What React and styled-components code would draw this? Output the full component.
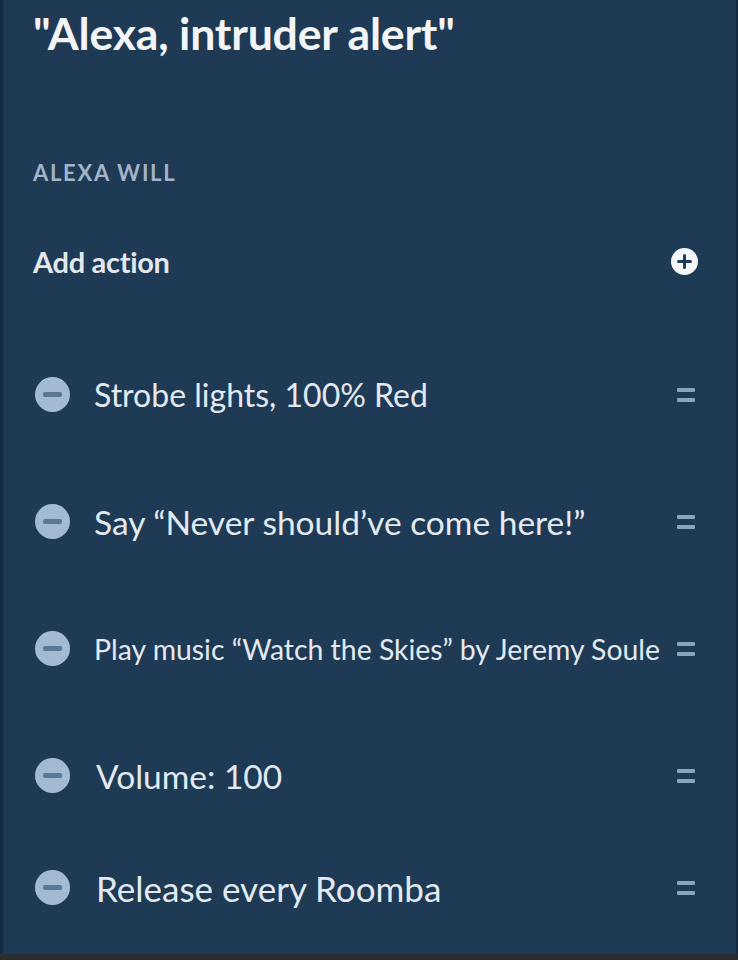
import React from "react";
import styled, { createGlobalStyle } from "styled-components";

const Global = createGlobalStyle`
  html, body { margin: 0; padding: 0; background: #2a2c2f; }
  body { font-family: Lato, "Liberation Sans", sans-serif; }
`;

const Screen = styled.div`
  width: 738px;
  height: 954px;
  box-sizing: border-box;
  background: #1f3a55;
  border-left: 3px solid #142a40;
  border-right: 2px solid #152b41;
  display: flex;
  flex-direction: column;
  overflow: hidden;
`;

const Title = styled.h1`
  margin: 0;
  padding: 8px 0 0 30px;
  height: 58px;
  font-family: Lato, "Liberation Sans", sans-serif;
  font-weight: 700;
  font-size: 44.6px;
  line-height: 50px;
  color: #f2f4f6;
  letter-spacing: -0.2px;
`;

const SectionLabel = styled.div`
  margin-top: 94px;
  padding-left: 30px;
  font-weight: 700;
  font-size: 22px;
  line-height: 26px;
  color: #a2b4c7;
  letter-spacing: 1.7px;
`;

const AddRow = styled.div`
  margin-top: 58px;
  padding: 0 38px 0 30px;
  height: 34px;
  display: flex;
  align-items: center;
  justify-content: space-between;
`;

const AddLabel = styled.span`
  font-size: 29px;
  font-weight: 700;
  color: #e2e8ee;
  letter-spacing: -0.3px;
`;

const PlusButton = styled.span`
  width: 27px;
  height: 27px;
  border-radius: 50%;
  background: #f4f6f8;
  display: flex;
  align-items: center;
  justify-content: center;
`;

const List = styled.div`
  margin-top: 53px;
  display: flex;
  flex-direction: column;
`;

const Row = styled.div`
  height: 127px;
  display: flex;
  align-items: center;
  padding: 0 41px 0 32px;
  &:last-child { height: 97px; }
`;

const MinusButton = styled.span`
  flex: none;
  width: 35px;
  height: 35px;
  border-radius: 50%;
  background: #a2bbd3;
  display: flex;
  align-items: center;
  justify-content: center;
  filter: blur(0.7px);
  &::before {
    content: "";
    width: 19px;
    height: 5px;
    border-radius: 2px;
    background: #5a7894;
  }
`;

const ItemText = styled.span`
  flex: 1;
  margin-left: ${(p) => p.$indent}px;
  font-size: ${(p) => p.$size}px;
  font-weight: 400;
  color: #e3eaf1;
  white-space: nowrap;
`;

const Handle = styled.span`
  flex: none;
  width: 18px;
  display: flex;
  flex-direction: column;
  gap: 6px;
  &::before, &::after {
    content: "";
    height: 4px;
    border-radius: 1px;
    background: #8ba3bb;
  }
`;

const items = [
  { text: "Strobe lights, 100% Red", size: 32, indent: 24 },
  { text: "Say “Never should’ve come here!”", size: 33.5, indent: 24 },
  { text: "Play music “Watch the Skies” by Jeremy Soule", size: 28.4, indent: 24 },
  { text: "Volume: 100", size: 33.5, indent: 26 },
  { text: "Release every Roomba", size: 35, indent: 26 },
];

export default function App() {
  return (
    <>
      <Global />
      <Screen>
        <Title>"Alexa, intruder alert"</Title>
        <SectionLabel>ALEXA WILL</SectionLabel>
        <AddRow>
          <AddLabel>Add action</AddLabel>
          <PlusButton>
            <svg width="17" height="17" viewBox="0 0 17 17">
              <path d="M8.5 2.5v12M2.5 8.5h12" stroke="#1f3a55" strokeWidth="3" strokeLinecap="round" />
            </svg>
          </PlusButton>
        </AddRow>
        <List>
          {items.map((it) => (
            <Row key={it.text}>
              <MinusButton />
              <ItemText $size={it.size} $indent={it.indent}>{it.text}</ItemText>
              <Handle />
            </Row>
          ))}
        </List>
      </Screen>
    </>
  );
}
